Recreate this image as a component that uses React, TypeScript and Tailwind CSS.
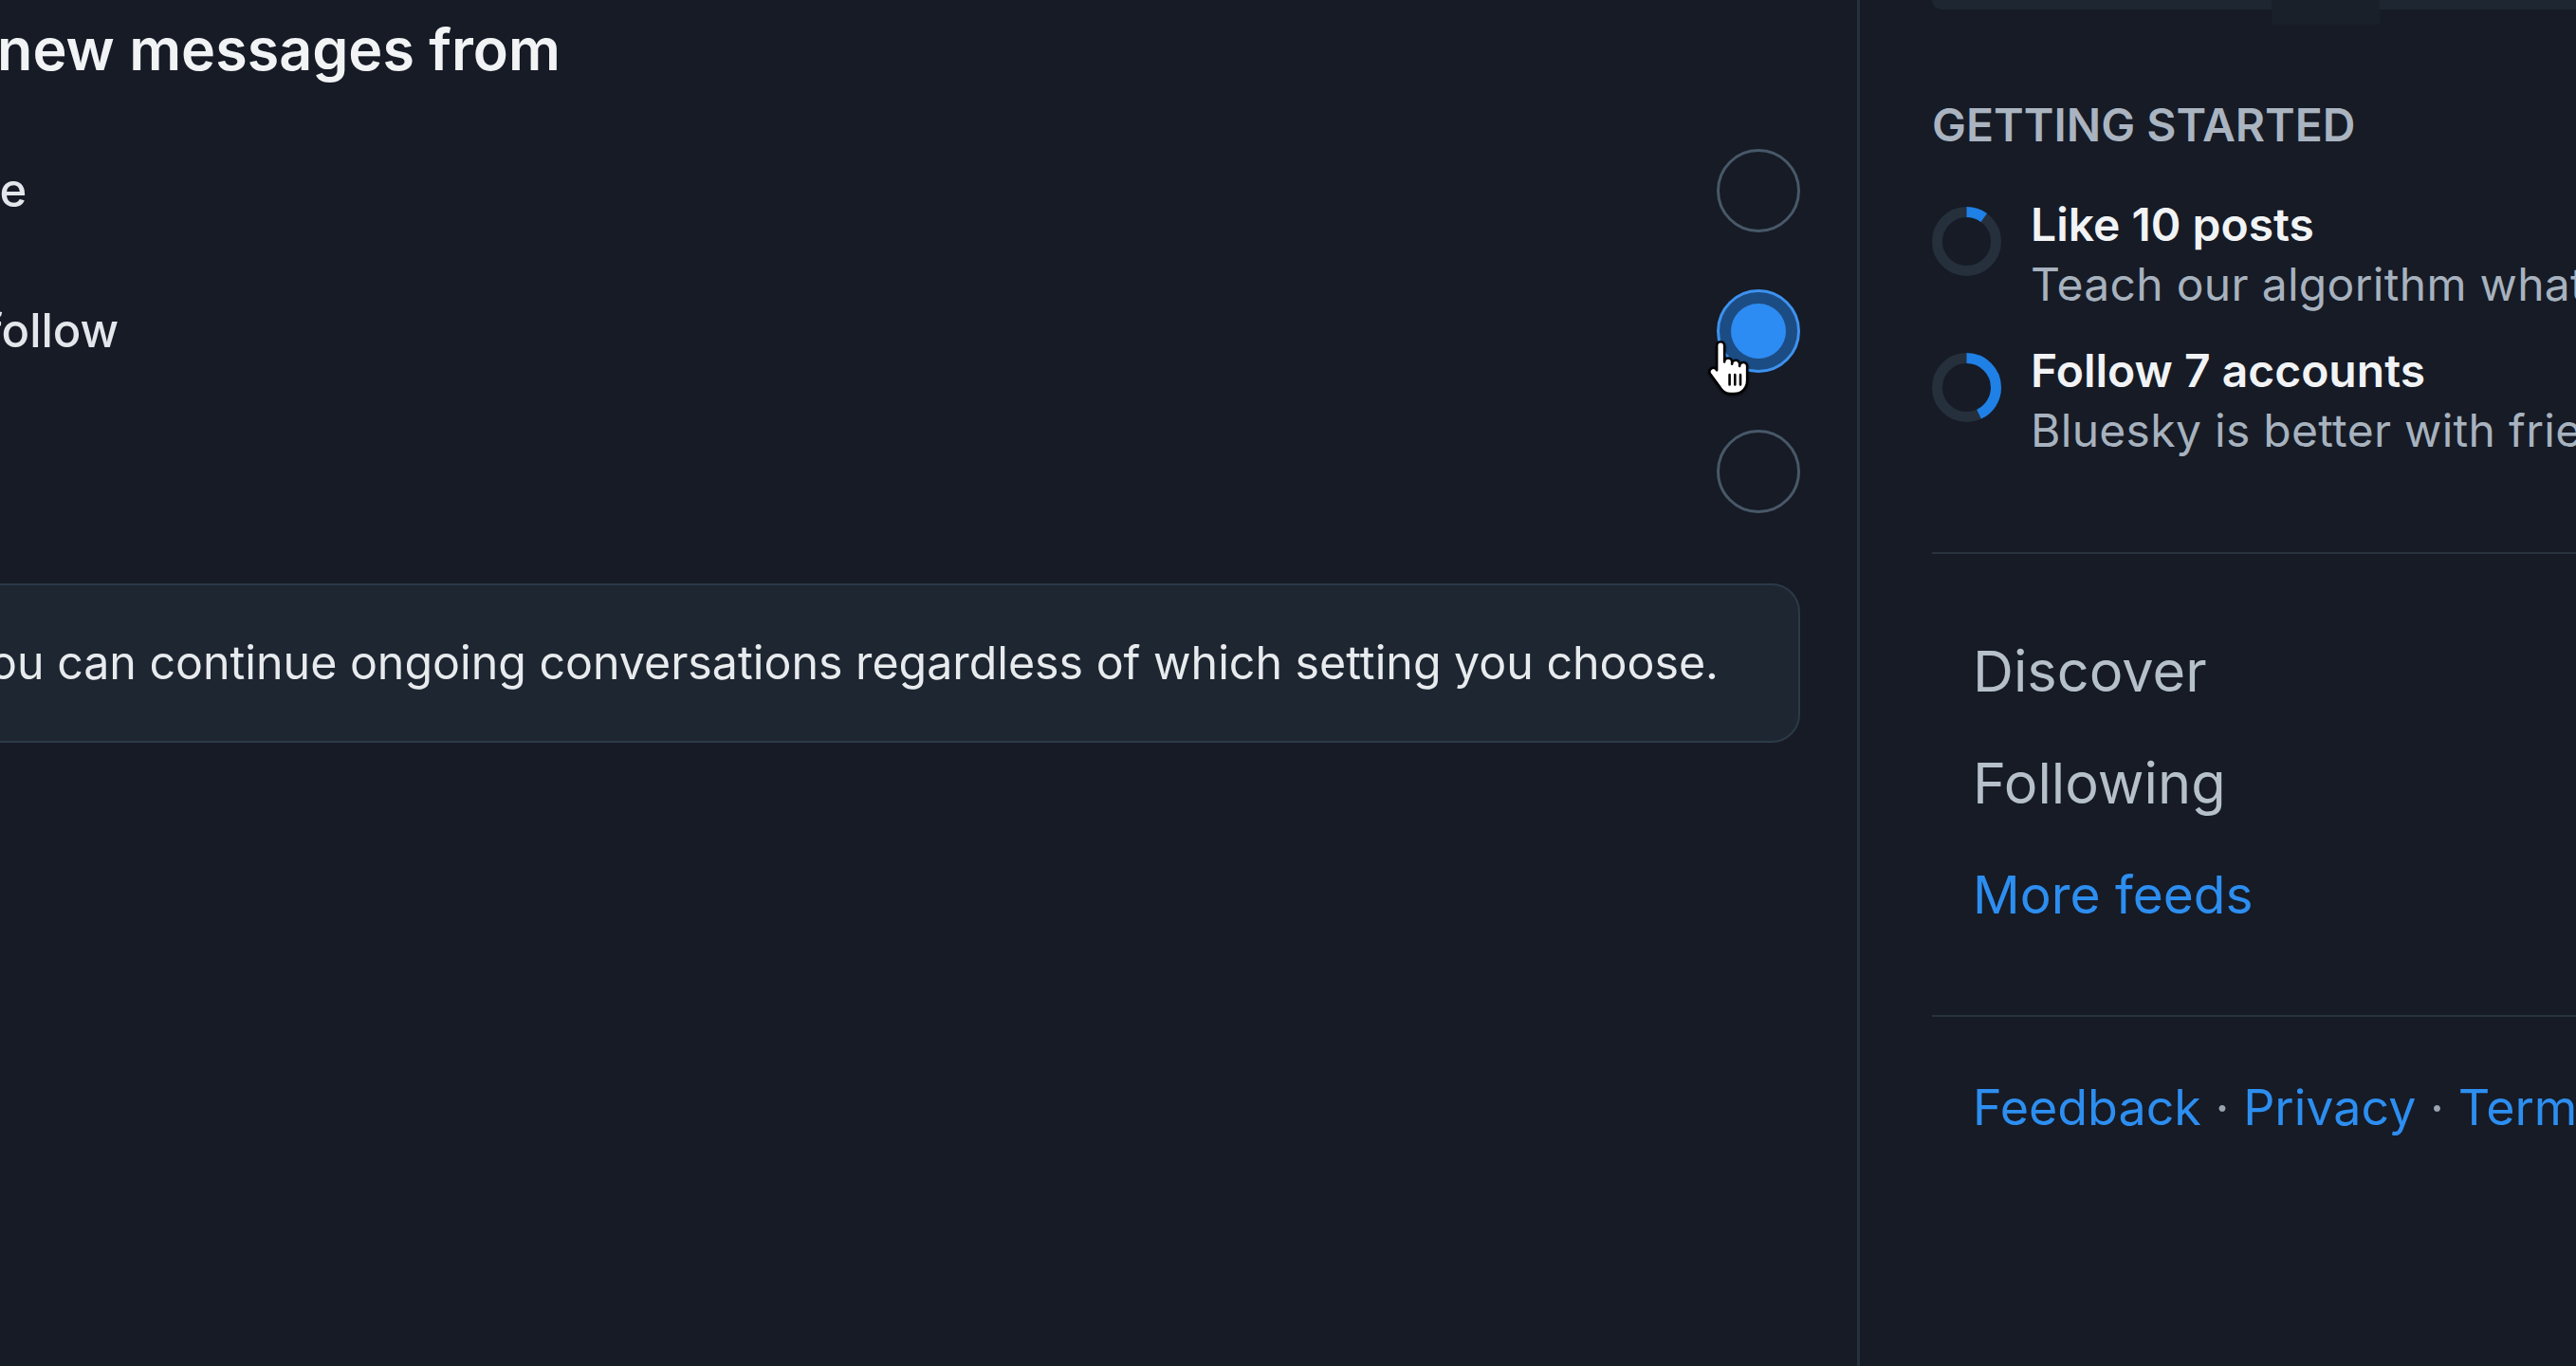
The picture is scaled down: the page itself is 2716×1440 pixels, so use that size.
import React from "react";

type RadioProps = { checked?: boolean };

function Radio({ checked }: RadioProps) {
  if (checked) {
    return (
      <div className="flex h-[88px] w-[88px] shrink-0 items-center justify-center rounded-full border-[3px] border-[#3d92ef] bg-[#1c4c84]">
        <div className="h-[58px] w-[58px] rounded-full bg-[#2d8cf3]" />
      </div>
    );
  }
  return <div className="h-[88px] w-[88px] shrink-0 rounded-full border-[3px] border-[#485868]" />;
}

function ProgressRing({ value }: { value: number }) {
  const r = 31;
  const c = 2 * Math.PI * r;
  return (
    <svg width="73" height="73" viewBox="0 0 73 73" className="shrink-0">
      <circle cx="36.5" cy="36.5" r={r} fill="none" stroke="#25303c" strokeWidth="11" />
      <circle
        cx="36.5"
        cy="36.5"
        r={r}
        fill="none"
        stroke="#1f80e6"
        strokeWidth="11"
        strokeDasharray={`${c * value} ${c}`}
        transform="rotate(-90 36.5 36.5)"
      />
    </svg>
  );
}

function HandCursor() {
  return (
    <svg width="52" height="60" viewBox="0 0 18 21" className="drop-shadow-[0_1px_1px_rgba(0,0,0,0.6)]">
      <path
        d="M4.5 2.2a1.4 1.4 0 0 1 2.8 0V8.2a1.4 1.4 0 0 1 2.8 0V9a1.4 1.4 0 0 1 2.8 0v0.8a1.4 1.4 0 0 1 2.8 0V15c0 3-2 5-4.8 5H9.6c-1.8 0-2.9-0.9-3.8-2.2L2 12.6a1.4 1.4 0 0 1 2.2-1.7l0.3 0.4Z"
        fill="#ffffff"
        stroke="#000000"
        strokeWidth="0.9"
        strokeLinejoin="round"
      />
      <path d="M9.2 13v3.6M11.2 13v3.6M13.2 13v3.6" stroke="#000000" strokeWidth="0.9" strokeLinecap="round" />
    </svg>
  );
}

const options = [
  { label: "Everyone", checked: false },
  { label: "Users I follow", checked: true },
  { label: "No one", checked: false },
];

export default function App() {
  return (
    <div className="flex h-[1440px] w-full overflow-hidden bg-[#161b26] font-['Inter',sans-serif]">
      {/* Main settings column */}
      <main className="relative h-full w-[1961px] shrink-0 overflow-hidden border-r-[3px] border-[#25313d]">
        <div className="ml-[-182px] pr-[60px] pt-[16px]">
          <h2 className="whitespace-nowrap text-[61px] font-semibold leading-[72px] text-[#f1f3f5]">
            Allow new messages from
          </h2>

          <div className="mt-[69px] flex flex-col gap-[60px]">
            {options.map((o) => (
              <div key={o.label} className="flex h-[88px] items-center justify-between">
                <span className="ml-[-10px] whitespace-nowrap text-[49px] font-medium leading-[58px] text-[#e3e7eb]">
                  {o.label}
                </span>
                <Radio checked={o.checked} />
              </div>
            ))}
          </div>

          <div className="mt-[74px] flex h-[168px] items-center rounded-[30px] border-[2px] border-[#2c3a48] bg-[#1d2631] pl-[140px]">
            <p className="whitespace-nowrap text-[48.3px] leading-[56px] text-[#e8ebee]">
              You can continue ongoing conversations regardless of which setting you choose.
            </p>
          </div>
        </div>

        {/* pointer hovering the selected option */}
        <div className="pointer-events-none absolute left-[1797px] top-[358px]">
          <HandCursor />
        </div>
      </main>

      {/* Right sidebar */}
      <aside className="relative h-full flex-1 overflow-hidden pl-[76px]">
        <div className="relative h-[10px] rounded-bl-[28px] bg-[#1e2632]">
          <div className="absolute left-[358px] top-0 h-[26px] w-[114px] bg-[#19202a]" />
        </div>

        <h3 className="mt-[93px] whitespace-nowrap text-[48px] font-semibold uppercase leading-[58px] text-[#aab4c0]">
          Getting started
        </h3>

        <div className="mt-[45px] flex flex-col gap-[29px]">
          {[
            { title: "Like 10 posts", sub: "Teach our algorithm what you like", value: 0.1 },
            { title: "Follow 7 accounts", sub: "Bluesky is better with friends!", value: 0.43 },
          ].map((t) => (
            <div key={t.title} className="flex items-start gap-[31px]">
              <div className="mt-[12px]">
                <ProgressRing value={t.value} />
              </div>
              <div className="flex flex-col">
                <span className="whitespace-nowrap text-[48px] font-semibold leading-[62px] text-[#f1f3f5]">
                  {t.title}
                </span>
                <span className="whitespace-nowrap text-[48px] leading-[63px] tracking-[0.3px] text-[#a7b2be]">
                  {t.sub}
                </span>
              </div>
            </div>
          ))}
        </div>

        <div className="mt-[97px] h-[2px] bg-[#27333f]" />

        <nav className="mt-[87px] flex flex-col gap-[46px] pl-[43px]">
          <span className="text-[59.5px] leading-[72px] text-[#b6c0cb]">Discover</span>
          <span className="text-[59.5px] leading-[72px] text-[#b6c0cb]">Following</span>
          <span className="text-[55px] leading-[72px] text-[#2d8ef0]">More feeds</span>
        </nav>

        <div className="mt-[91px] h-[2px] bg-[#27333f]" />

        <div className="mt-[65px] whitespace-nowrap pl-[43px] text-[52px] leading-[62px] text-[#2d8ef0]">
          <span>Feedback</span>
          <span className="text-[#9aa5b1]"> · </span>
          <span>Privacy</span>
          <span className="text-[#9aa5b1]"> · </span>
          <span>Terms</span>
          <span className="text-[#9aa5b1]"> · </span>
          <span>Help</span>
        </div>
      </aside>
    </div>
  );
}
